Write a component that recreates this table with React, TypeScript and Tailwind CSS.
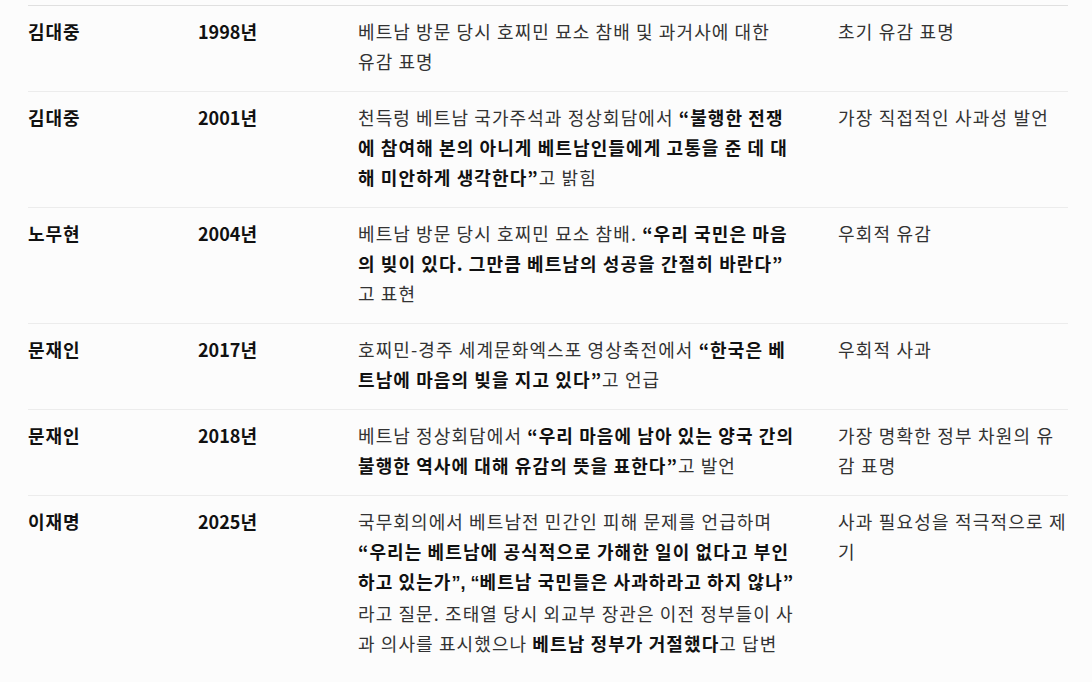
import React from 'react';

type Row = {
  name: string;
  year: string;
  content: React.ReactNode;
  note: string;
};

const B = ({ children }: { children: React.ReactNode }) => (
  <strong className="font-bold tracking-[1.1px] text-[#111]">{children}</strong>
);

const rows: Row[] = [
  {
    name: '김대중',
    year: '1998년',
    content: (
      <>
        베트남 방문 당시 호찌민 묘소 참배 및 과거사에 대한 <span className="whitespace-nowrap">유감</span> 표명
      </>
    ),
    note: '초기 유감 표명',
  },
  {
    name: '김대중',
    year: '2001년',
    content: (
      <>
        천득렁 베트남 국가주석과 정상회담에서{' '}
        <B>“불행한 전쟁에 참여해 본의 아니게 베트남인들에게 고통을 준 데 대해 미안하게 생각한다”</B>
        <wbr />고 밝힘
      </>
    ),
    note: '가장 직접적인 사과성 발언',
  },
  {
    name: '노무현',
    year: '2004년',
    content: (
      <>
        베트남 방문 당시 호찌민 묘소 참배. <B>“우리 국민은 마음의 빚이 있다. 그만큼 베트남의 성공을 간절히 바란다”</B>
        <wbr />고 표현
      </>
    ),
    note: '우회적 유감',
  },
  {
    name: '문재인',
    year: '2017년',
    content: (
      <>
        호찌민-경주 세계문화엑스포 영상축전에서 <B>“한국은 베트남에 마음의 빚을 지고 있다”</B>
        <wbr />고 언급
      </>
    ),
    note: '우회적 사과',
  },
  {
    name: '문재인',
    year: '2018년',
    content: (
      <>
        베트남 정상회담에서 <B>“우리 마음에 남아 있는 양국 간의 불행한 역사에 대해 유감의 뜻을 표한다”</B>
        <wbr />고 발언
      </>
    ),
    note: '가장 명확한 정부 차원의 유감 표명',
  },
  {
    name: '이재명',
    year: '2025년',
    content: (
      <>
        국무회의에서 베트남전 민간인 피해 문제를 언급하며{' '}
        <B>
          “우리는 베트남에 공식적으로 가해한 일이 없다고 부인하고 있는가
          <span className="font-['Liberation_Sans',sans-serif] tracking-normal">”, “</span>
          베트남 국민들은 사과하라고 하지 않나”
        </B>
        <wbr />라고 질문. 조태열 당시 외교부 장관은 이전 정부들이 사과 의사를 표시했으나 <B>베트남 정부가 거절했다</B>
        고 답변
      </>
    ),
    note: '사과 필요성을 적극적으로 제기',
  },
];

export default function App() {
  return (
    <div
      className="min-h-[682px] bg-[#fcfcfc] pt-[5px] text-[18px] leading-[30px] tracking-[1.1px] text-[#333]"
      style={{ fontFamily: '"Noto Sans CJK KR", "Noto Sans", sans-serif' }}
    >
      <div className="mx-[28px] w-[1040px] border-t border-[#e0e0e0] [word-break:break-all]">
        {rows.map((row, i) => (
          <div
            key={i}
            className={`grid grid-cols-[170px_160px_480px_230px] pt-[10px] pb-[15px] ${
              i < rows.length - 1 ? 'border-b border-[#ececec]' : ''
            }`}
          >
            <div className="font-bold tracking-[0.9px] text-[#111]">{row.name}</div>
            <div className="font-bold tracking-normal text-[#111]">{row.year}</div>
            <div className="pr-[40px]">{row.content}</div>
            <div className="tracking-[1.2px]">{row.note}</div>
          </div>
        ))}
      </div>
    </div>
  );
}
